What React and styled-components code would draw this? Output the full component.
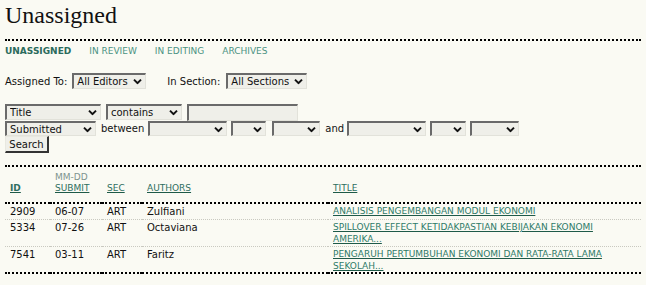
import React from 'react';
import styled, { createGlobalStyle } from 'styled-components';

const Global = createGlobalStyle`
  html, body { margin: 0; padding: 0; background: #FAFAF3; }
  body {
    font-family: "DejaVu Sans", Verdana, sans-serif;
    font-size: 10px;
    color: #111;
  }
`;

const Page = styled.div`
  padding: 1px 5px 0 5px;
`;

const Heading = styled.h1`
  margin: 0;
  font-family: "Liberation Serif", Georgia, serif;
  font-weight: normal;
  font-size: 24px;
  line-height: 28px;
  color: #111;
`;

const Separator = styled.div`
  border-top: 2px dotted #000;
  margin-top: ${p => p.$mt || 0}px;
`;

const Tabs = styled.ul`
  list-style: none;
  margin: 5px 0 0 0;
  padding: 0;
  display: flex;
  gap: 18px;
  font-size: 9px;
  line-height: 11px;
`;

const Tab = styled.li`
  color: ${p => (p.$active ? '#2b6b5c' : '#4a9282')};
  font-weight: ${p => (p.$active ? 'bold' : 'normal')};
`;

const FilterRow = styled.div`
  display: flex;
  align-items: center;
  margin-top: ${p => p.$mt || 0}px;
  height: ${p => p.$h}px;
`;

const Label = styled.span`
  margin-left: ${p => p.$ml || 0}px;
  white-space: nowrap;
`;

const SelectWrap = styled.span`
  position: relative;
  display: inline-flex;
  margin-left: ${p => p.$ml || 0}px;
  width: ${p => p.$w}px;
  height: ${p => p.$h}px;
`;

const Select = styled.select`
  appearance: none;
  -webkit-appearance: none;
  box-sizing: border-box;
  width: 100%;
  height: 100%;
  margin: 0;
  padding: 0 12px 0 3px;
  font-family: "DejaVu Sans", Verdana, sans-serif;
  font-size: 10px;
  color: #111;
  background: #EFEFE9;
  border-style: solid;
  border-width: 2px 1px 1px 2px;
  border-color: #6a6a6a #e2e2da #e2e2da #6a6a6a;
  border-radius: 0;
  outline: none;
`;

const Chevron = styled.svg`
  position: absolute;
  right: 4px;
  top: 50%;
  transform: translateY(-40%);
  pointer-events: none;
`;

const TextInput = styled.input`
  box-sizing: border-box;
  margin: 0 0 0 ${p => p.$ml || 0}px;
  width: ${p => p.$w}px;
  height: ${p => p.$h}px;
  padding: 0 3px;
  font-family: "DejaVu Sans", Verdana, sans-serif;
  font-size: 10px;
  background: #EFEFE9;
  border-style: solid;
  border-width: 2px 1px 1px 2px;
  border-color: #6a6a6a #e2e2da #e2e2da #6a6a6a;
  outline: none;
`;

const Button = styled.button`
  box-sizing: border-box;
  display: block;
  width: 44px;
  height: 17px;
  margin: 0;
  padding: 0;
  font-family: "DejaVu Sans", Verdana, sans-serif;
  font-size: 10px;
  color: #111;
  background: #EFEFE9;
  border-style: solid;
  border-width: 1px 2px 2px 1px;
  border-color: #e8e8e0 #333 #333 #e8e8e0;
  border-radius: 0;
`;

const SearchForm = styled.div`
  margin-top: 15px;
  display: flex;
  flex-direction: column;
  align-items: flex-start;
`;

const Table = styled.table`
  width: 100%;
  table-layout: fixed;
  border-collapse: separate;
  border-spacing: 0;
`;

const Th = styled.th`
  width: ${p => (p.$w ? `${p.$w}px` : 'auto')};
  box-sizing: border-box;
  padding: 5px 5px 8px 5px;
  text-align: left;
  vertical-align: bottom;
  font-weight: normal;
  font-size: 9px;
  line-height: 11px;
  border-bottom: 2px dotted #000;
  color: #7d948e;
`;

const HeadLink = styled.a`
  color: #2d6e60;
  font-weight: ${p => (p.$bold ? 'bold' : 'normal')};
  text-decoration: underline;
  text-decoration-color: #1e5a48;
`;

const Td = styled.td`
  padding: 2px 5px ${p => (p.$last ? 0 : 1)}px 5px;
  vertical-align: top;
  font-size: ${p => (p.$small ? 9 : 10)}px;
  line-height: ${p => (p.$small ? 11.5 : 12)}px;
  color: #111;
  border-bottom: ${p => (p.$last ? '2px dotted #000' : '1px dotted #c9c9c0')};
`;

const TitleLink = styled.a`
  display: block;
  max-width: 282px;
  color: #2e7a68;
  text-decoration: underline;
  text-decoration-color: #1e5a48;
`;

const ChevronIcon = () => (
  <Chevron width="9" height="6" viewBox="0 0 9 6">
    <path d="M1 1 L4.5 4.5 L8 1" fill="none" stroke="#111" strokeWidth="2" />
  </Chevron>
);

const Dropdown = ({ w, h, ml, value, options = [] }) => (
  <SelectWrap $w={w} $h={h} $ml={ml}>
    <Select defaultValue={value}>
      {[value, ...options].map((o, i) => (
        <option key={i} value={o}>{o}</option>
      ))}
    </Select>
    <ChevronIcon />
  </SelectWrap>
);

const rows = [
  { id: '2909', date: '06-07', sec: 'ART', author: 'Zulfiani', title: 'ANALISIS PENGEMBANGAN MODUL EKONOMI' },
  { id: '5334', date: '07-26', sec: 'ART', author: 'Octaviana', title: 'SPILLOVER EFFECT KETIDAKPASTIAN KEBIJAKAN EKONOMI AMERIKA...' },
  { id: '7541', date: '03-11', sec: 'ART', author: 'Faritz', title: 'PENGARUH PERTUMBUHAN EKONOMI DAN RATA-RATA LAMA SEKOLAH...' },
];

export default function App() {
  return (
    <>
      <Global />
      <Page>
        <Heading>Unassigned</Heading>
        <Separator $mt={10} />
        <Tabs>
          <Tab $active>UNASSIGNED</Tab>
          <Tab>IN REVIEW</Tab>
          <Tab>IN EDITING</Tab>
          <Tab>ARCHIVES</Tab>
        </Tabs>

        <FilterRow $mt={16} $h={16}>
          <Label>Assigned To:</Label>
          <Dropdown w={74} h={16} ml={5} value="All Editors" />
          <Label $ml={21}>In Section:</Label>
          <Dropdown w={81} h={16} ml={6} value="All Sections" />
        </FilterRow>

        <SearchForm>
          <FilterRow $h={16}>
            <Dropdown w={96} h={16} value="Title" />
            <Dropdown w={76} h={16} ml={5} value="contains" />
            <TextInput $w={111} $h={17} $ml={5} />
          </FilterRow>
          <FilterRow $mt={1} $h={15}>
            <Dropdown w={91} h={15} value="Submitted" />
            <Label $ml={5}>between</Label>
            <Dropdown w={79} h={15} ml={4} value="" />
            <Dropdown w={35} h={15} ml={4} value="" />
            <Dropdown w={48} h={15} ml={6} value="" />
            <Label $ml={5}>and</Label>
            <Dropdown w={79} h={15} ml={3} value="" />
            <Dropdown w={36} h={15} ml={4} value="" />
            <Dropdown w={49} h={15} ml={4} value="" />
          </FilterRow>
          <Button>Search</Button>
        </SearchForm>

        <Separator $mt={12} />
        <Table>
          <thead>
            <tr>
              <Th $w={45}><HeadLink $bold>ID</HeadLink></Th>
              <Th $w={52}>MM-DD<br /><HeadLink>SUBMIT</HeadLink></Th>
              <Th $w={40}><HeadLink>SEC</HeadLink></Th>
              <Th $w={186}><HeadLink>AUTHORS</HeadLink></Th>
              <Th><HeadLink>TITLE</HeadLink></Th>
            </tr>
          </thead>
          <tbody>
            {rows.map((r, i) => {
              const last = i === rows.length - 1;
              return (
                <tr key={r.id}>
                  <Td $last={last}>{r.id}</Td>
                  <Td $last={last}>{r.date}</Td>
                  <Td $last={last}>{r.sec}</Td>
                  <Td $last={last}>{r.author}</Td>
                  <Td $last={last} $small><TitleLink>{r.title}</TitleLink></Td>
                </tr>
              );
            })}
          </tbody>
        </Table>
      </Page>
    </>
  );
}
